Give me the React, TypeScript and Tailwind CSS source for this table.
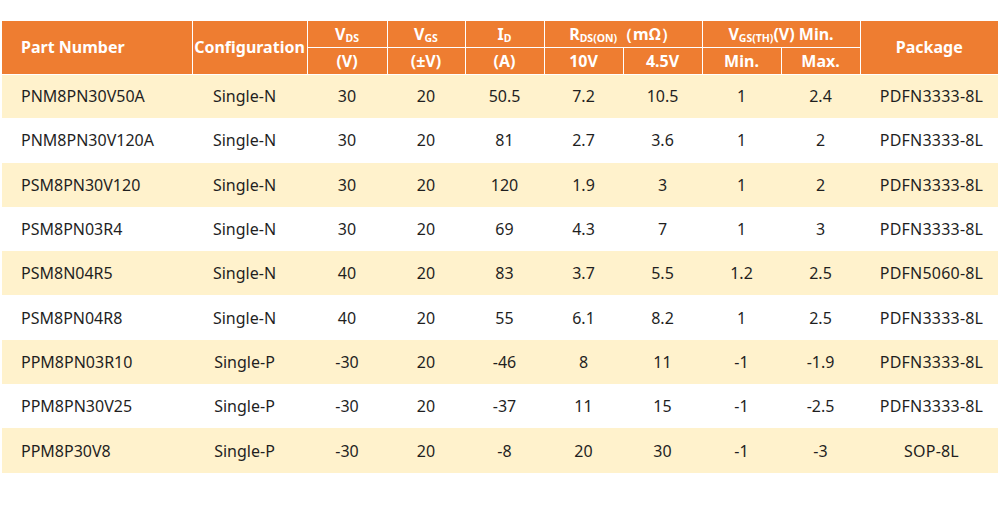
import React from 'react';

type Row = [string, string, string, string, string, string, string, string, string, string];

const rows: Row[] = [
  ['PNM8PN30V50A', 'Single-N', '30', '20', '50.5', '7.2', '10.5', '1', '2.4', 'PDFN3333-8L'],
  ['PNM8PN30V120A', 'Single-N', '30', '20', '81', '2.7', '3.6', '1', '2', 'PDFN3333-8L'],
  ['PSM8PN30V120', 'Single-N', '30', '20', '120', '1.9', '3', '1', '2', 'PDFN3333-8L'],
  ['PSM8PN03R4', 'Single-N', '30', '20', '69', '4.3', '7', '1', '3', 'PDFN3333-8L'],
  ['PSM8N04R5', 'Single-N', '40', '20', '83', '3.7', '5.5', '1.2', '2.5', 'PDFN5060-8L'],
  ['PSM8PN04R8', 'Single-N', '40', '20', '55', '6.1', '8.2', '1', '2.5', 'PDFN3333-8L'],
  ['PPM8PN03R10', 'Single-P', '-30', '20', '-46', '8', '11', '-1', '-1.9', 'PDFN3333-8L'],
  ['PPM8PN30V25', 'Single-P', '-30', '20', '-37', '11', '15', '-1', '-2.5', 'PDFN3333-8L'],
  ['PPM8P30V8', 'Single-P', '-30', '20', '-8', '20', '30', '-1', '-3', 'SOP-8L'],
];

const widths = [190, 115, 80, 78, 79, 79, 79, 79, 79, 138];

const th = 'border border-white bg-[#ee7d31] text-white font-bold text-[16px] leading-none text-center p-0';
const sub = 'text-[10.5px] align-baseline relative top-[2px]';

// per-column tweaks so text sits where the source image has it
const cellPad = ['text-left pl-[19px]', 'text-center pr-[10px]', 'text-center', 'text-center', 'text-center', 'text-center', 'text-center', 'text-center', 'text-center', 'text-center pl-[5px] tracking-[0.2px]'];

export default function App() {
  return (
    <div className="w-[1002px] h-[530px] bg-white pt-[21px] pl-[2px]" style={{ fontFamily: '"Noto Sans", "Open Sans", sans-serif' }}>
      <table className="table-fixed border-collapse w-[996px] text-[#1f1f1f]">
        <colgroup>
          {widths.map((w, i) => (
            <col key={i} style={{ width: w }} />
          ))}
        </colgroup>
        <thead>
          <tr className="h-[26px]">
            <th rowSpan={2} className={`${th} text-left pl-[19px] border-l-0 border-t-0`}>Part Number</th>
            <th rowSpan={2} className={`${th} border-t-0`}>Configuration</th>
            <th className={`${th} border-t-0`}>V<span className={sub}>DS</span></th>
            <th className={`${th} border-t-0`}>V<span className={sub}>GS</span></th>
            <th className={`${th} border-t-0`}>I<span className={sub}>D</span></th>
            <th colSpan={2} className={`${th} border-t-0`}>
              R<span className={sub}>DS(ON)</span>（mΩ）
            </th>
            <th colSpan={2} className={`${th} border-t-0`}>
              V<span className={sub}>GS(TH)</span>(V) Min.
            </th>
            <th rowSpan={2} className={`${th} border-t-0 border-r-0`}>Package</th>
          </tr>
          <tr className="h-[27px]">
            <th className={th}>(V)</th>
            <th className={th}>(±V)</th>
            <th className={th}>(A)</th>
            <th className={th}>10V</th>
            <th className={th}>4.5V</th>
            <th className={th}>Min.</th>
            <th className={th}>Max.</th>
          </tr>
        </thead>
        <tbody>
          {rows.map((r, i) => (
            <tr key={r[0]} className={`h-[44.3px] ${i % 2 === 0 ? 'bg-[#fff2cc]' : 'bg-white'}`}>
              {r.map((c, j) => (
                <td key={j} className={`p-0 text-[16px] leading-none ${cellPad[j]}`}>
                  {c}
                </td>
              ))}
            </tr>
          ))}
        </tbody>
      </table>
    </div>
  );
}
